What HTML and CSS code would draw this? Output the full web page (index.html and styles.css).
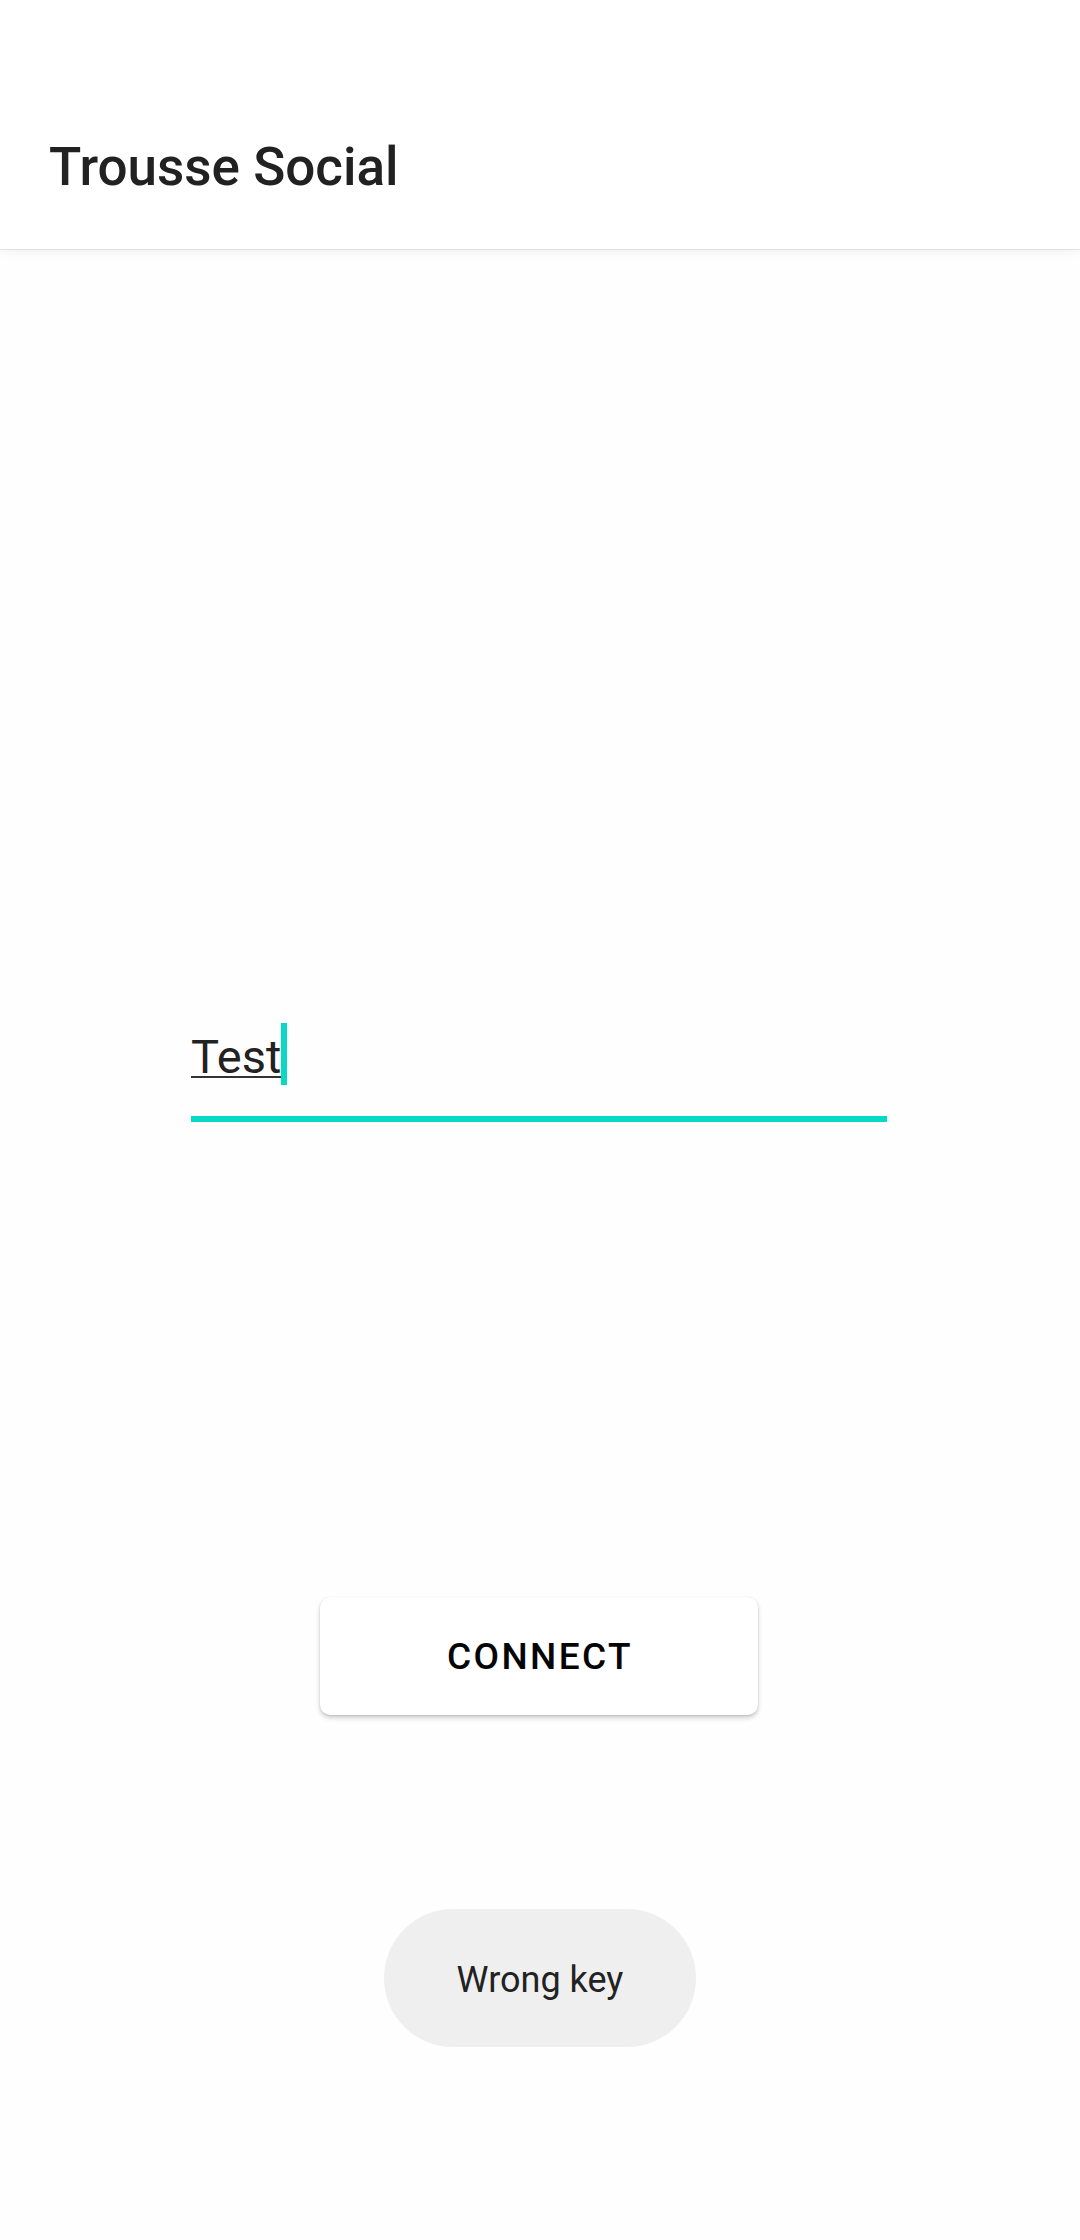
FILE: index.html
```html
<!DOCTYPE html>
<html>
<head>
<meta charset="utf-8">
<link rel="stylesheet" href="styles.css">
</head>
<body>
<header class="appbar">
  <h1 class="title">Trousse Social</h1>
</header>
<main class="content">
  <div class="field">
    <div class="field-row">
      <span class="field-text">Test</span>
      <span class="cursor"></span>
    </div>
    <div class="field-line"></div>
  </div>
  <button class="connect">CONNECT</button>
  <div class="toast">Wrong key</div>
</main>
</body>
</html>
```
FILE: styles.css
```css
html, body {
  margin: 0;
  padding: 0;
  background: #fefefe;
}
body {
  width: 1080px;
  height: 2240px;
  font-family: Roboto, "Noto Sans", sans-serif;
  overflow: hidden;
}
.appbar {
  position: relative;
  z-index: 2;
  height: 249px;
  box-sizing: border-box;
  padding: 135px 0 0 49px;
  background: #ffffff;
  box-shadow: 0 1px 1px rgba(0,0,0,0.08), 0 3px 12px rgba(0,0,0,0.05);
}
.title {
  margin: 0;
  font-size: 53px;
  line-height: 64px;
  font-weight: 500;
  color: #212121;
}
.content {
  display: flex;
  flex-direction: column;
  align-items: center;
}
.field {
  margin-top: 774px;
  width: 696px;
  margin-left: -2px;
  display: flex;
  flex-direction: column;
}
.field-row {
  display: flex;
  align-items: flex-start;
  height: 62px;
}
.field-text {
  margin-top: 3px;
  font-size: 47px;
  line-height: 62px;
  color: #222222;
  white-space: nowrap;
  text-decoration: underline;
  text-decoration-thickness: 2px;
  text-underline-offset: 3px;
  text-decoration-color: #333;
}
.cursor {
  width: 6px;
  height: 62px;
  background: #0ad8c4;
}
.field-line {
  margin-top: 31px;
  height: 6px;
  background: #08d9c6;
}
.connect {
  margin-top: 475px;
  width: 438px;
  height: 118px;
  margin-left: -2px;
  border: none;
  border-radius: 10px;
  background: #ffffff;
  box-shadow: 0 3px 5px rgba(0,0,0,0.18), 0 1px 2px rgba(0,0,0,0.10), 0 0 1px rgba(0,0,0,0.08);
  font-family: Roboto, "Noto Sans", sans-serif;
  font-size: 37px;
  font-weight: 500;
  letter-spacing: 2.4px;
  color: #050505;
  padding: 0 0 0 2px;
}
.toast {
  margin-top: 194px;
  width: 312px;
  height: 138px;
  border-radius: 69px;
  background: #efefef;
  display: flex;
  align-items: center;
  justify-content: center;
  font-size: 36px;
  color: #222222;
  padding-top: 4px;
  box-sizing: border-box;
}
```
